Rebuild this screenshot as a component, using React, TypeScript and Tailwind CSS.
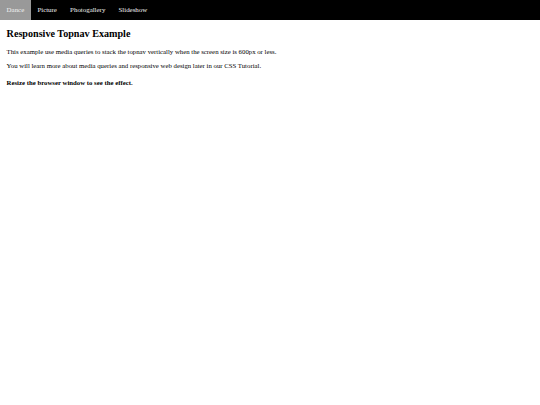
import React from 'react';

const links = ['Dance', 'Picture', 'Photogallery', 'Slideshow'];

const App: React.FC = () => {
  return (
    <div className="min-h-screen bg-white text-black" style={{ fontFamily: '"Liberation Serif", "Times New Roman", serif' }}>
      <nav className="flex bg-black">
        {links.map((name, i) => (
          <a
            key={name}
            className={`block px-[6.6px] py-[5.8px] text-[6.9px] leading-[8px] text-[#f2f2f2] ${i === 0 ? 'bg-[#999999]' : ''}`}
          >
            {name}
          </a>
        ))}
      </nav>
      <div className="pl-[6.6px]">
        <h2 className="mt-[8.2px] mb-[8.2px] text-[10.15px] font-bold leading-[11.6px]">Responsive Topnav Example</h2>
        <p className="mb-[6.6px] text-[6.78px] leading-[7.8px]">
          This example use media queries to stack the topnav vertically when the screen size is 600px or less.
        </p>
        <p className="mb-[6.6px] text-[6.78px] leading-[7.8px]">
          You will learn more about media queries and responsive web design later in our CSS Tutorial.
        </p>
        <h4 className="mt-[8.8px] text-[6.78px] font-bold leading-[7.8px]">Resize the browser window to see the effect.</h4>
      </div>
    </div>
  );
};

export default App;
